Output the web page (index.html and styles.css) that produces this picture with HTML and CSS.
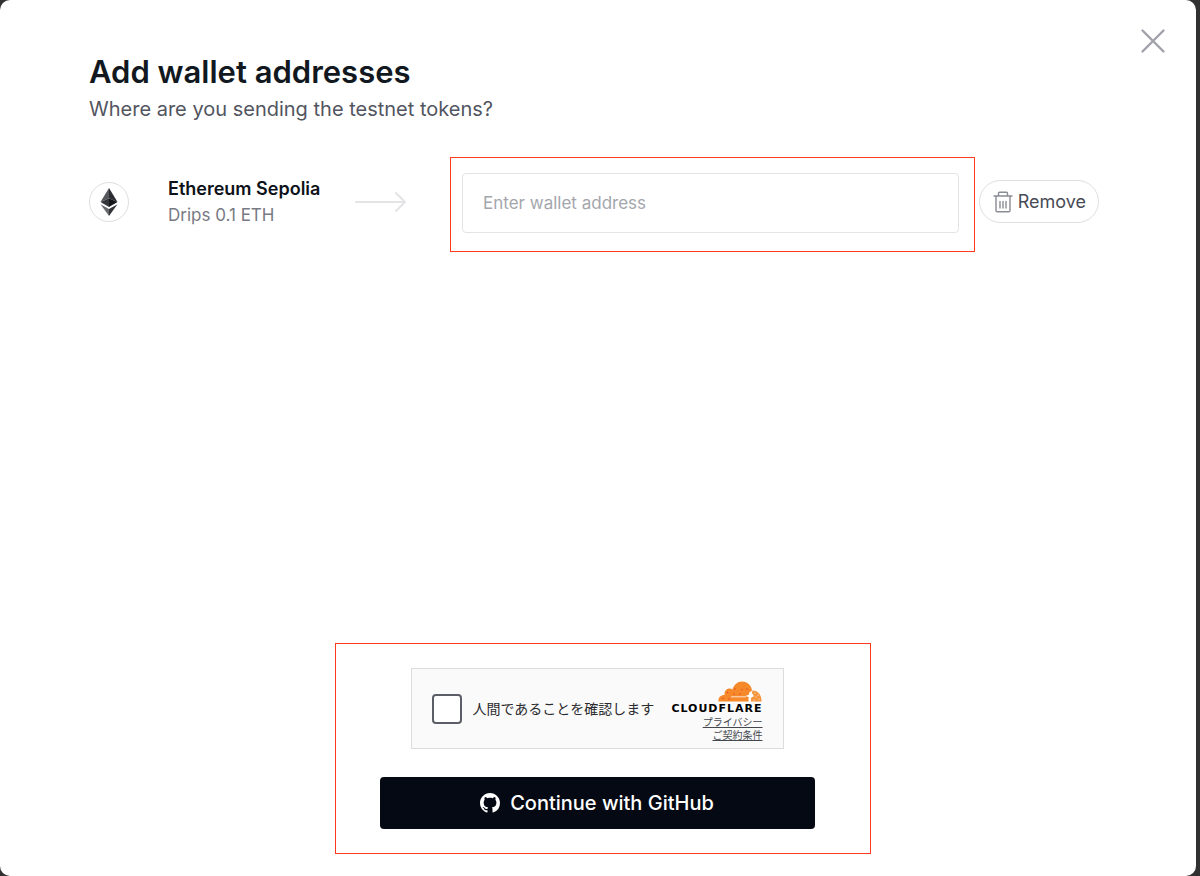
FILE: index.html
```html
<!DOCTYPE html>
<html lang="en">
<head>
    <meta charset="UTF-8">
    <meta name="viewport" content="width=device-width, initial-scale=1.0">
    <title>Add wallet addresses</title>
    <link rel="stylesheet" href="styles.css">
</head>
<body>
    <main class="modal">
        <button class="close" type="button" aria-label="Close">
            <svg width="26" height="26" viewBox="0 0 26 26" fill="none" stroke="#a1a1aa" stroke-width="2.4" stroke-linecap="round">
                <path d="M2.5 2.5l21 21M23.5 2.5l-21 21"/>
            </svg>
        </button>

        <header class="heading">
            <h1>Add wallet addresses</h1>
            <p>Where are you sending the testnet tokens?</p>
        </header>

        <form class="form">
            <div class="wallet">
                <div class="coin">
                    <svg width="18" height="28" viewBox="0 0 18 28">
                        <path fill="#55565b" d="M9 0L0.5 14L9 10.2z"/>
                        <path fill="#2b2d33" d="M9 0L17.5 14L9 10.2z"/>
                        <path fill="#34363c" d="M0.5 14L9 10.2V19z"/>
                        <path fill="#14161b" d="M17.5 14L9 10.2V19z"/>
                        <path fill="#696a6f" d="M0.5 16.2L9 21V28z"/>
                        <path fill="#33353b" d="M17.5 16.2L9 21V28z"/>
                    </svg>
                </div>
                <div class="network">
                    <label for="address">Ethereum Sepolia</label>
                    <p>Drips 0.1 ETH</p>
                </div>
                <svg class="arrow" width="52" height="22" viewBox="0 0 52 22" fill="none" stroke="#e4e4e7" stroke-width="2" stroke-linecap="round" stroke-linejoin="round">
                    <path d="M1 11h49M41 2l9 9l-9 9"/>
                </svg>
                <div class="frame address-frame">
                    <input class="address" id="address" type="text" placeholder="Enter wallet address">
                </div>
                <button class="remove" type="button">
                    <svg width="20" height="22" viewBox="0 0 20 22" fill="none" stroke="#898c94" stroke-width="1.4" stroke-linecap="round" stroke-linejoin="round">
                        <path d="M1 5h18M5.5 5V2.2Q5.5 1.2 6.5 1.2h7Q14.5 1.2 14.5 2.2V5M3 5v14.6Q3 20.8 4.2 20.8h11.6Q17 20.8 17 19.6V5M7 10.5v6.5M10 10.5v6.5M13 10.5v6.5"/>
                    </svg>
                    Remove
                </button>
            </div>

            <div class="frame submit-frame">
                <div class="captcha" lang="ja">
                    <label class="check">
                        <input type="checkbox">
                        人間であることを確認します
                    </label>
                    <div class="brand">
                        <svg width="46" height="21" viewBox="0 0 46 21">
                            <path fill="#f6892a" d="M1.5 20.5C1 16.5 3.5 14 7.5 14C7 9 11.5 6 15.5 8.5C17 3.5 20.5 0.5 25 0.5C30.5 0.5 34.5 4.5 35 9.5L32 12L35 15L31.5 17V20.5z"/>
                            <path fill="#f6943a" d="M35.5 9.5C41 9.5 44.8 14 44.5 20.5H34V17L36.5 14.5L35 12z"/>
                            <path fill="#fff" d="M33 10.5l1.2 3.3l3.3 1.2l-3.3 1.2l-1.2 3.3l-1.2-3.3l-3.3-1.2l3.3-1.2z"/>
                            <path stroke="#fde3cc" stroke-width="1" d="M14 15.8h15"/>
                            <g fill="#ee3b2b">
                                <circle cx="10.5" cy="11.5" r=".7"/><circle cx="17" cy="13" r=".7"/>
                                <circle cx="18" cy="8" r=".7"/><circle cx="25" cy="8.5" r=".7"/>
                                <circle cx="30" cy="8" r=".7"/><circle cx="23" cy="13" r=".7"/>
                                <circle cx="6" cy="17.5" r=".7"/><circle cx="12" cy="18" r=".7"/>
                            </g>
                            <g fill="#fff">
                                <circle cx="38" cy="12" r=".6"/><circle cx="41" cy="14" r=".6"/>
                                <circle cx="39" cy="16" r=".6"/><circle cx="42" cy="18" r=".6"/>
                                <circle cx="37" cy="19" r=".6"/>
                            </g>
                        </svg>
                        <strong>CLOUDFLARE</strong>
                        <a href="#">プライバシー</a>
                        <a href="#">ご契約条件</a>
                    </div>
                </div>
                <button class="github" type="submit">
                    <svg width="20" height="20" viewBox="0 0 16 16" fill="#fff">
                        <path d="M8 0C3.58 0 0 3.58 0 8c0 3.54 2.29 6.53 5.47 7.59.4.07.55-.17.55-.38 0-.19-.01-.82-.01-1.49-2.01.37-2.53-.49-2.69-.94-.09-.23-.48-.94-.82-1.13-.28-.15-.68-.52-.01-.53.63-.01 1.08.58 1.23.82.72 1.21 1.87.87 2.33.66.07-.52.28-.87.51-1.07-1.78-.2-3.64-.89-3.64-3.95 0-.87.31-1.59.82-2.15-.08-.2-.36-1.02.08-2.12 0 0 .67-.21 2.2.82.64-.18 1.32-.27 2-.27s1.36.09 2 .27c1.53-1.04 2.2-.82 2.2-.82.44 1.1.16 1.92.08 2.12.51.56.82 1.27.82 2.15 0 3.07-1.87 3.75-3.65 3.95.29.25.54.73.54 1.48 0 1.07-.01 1.93-.01 2.2 0 .21.15.46.55.38A8.01 8.01 0 0 0 16 8c0-4.42-3.58-8-8-8z"/>
                    </svg>
                    Continue with GitHub
                </button>
            </div>
        </form>
    </main>
</body>
</html>
```
FILE: styles.css
```css
* {
    box-sizing: border-box;
}
body {
    margin: 0;
    font-family: Inter, "Noto Sans CJK JP", sans-serif;
    background: #313131;
}
h1, p {
    margin: 0;
}
button {
    font-family: inherit;
    cursor: pointer;
}
.modal {
    position: relative;
    display: flex;
    flex-direction: column;
    min-height: 100vh;
    margin-right: 4px;
    padding: 51px 97px 22px 89px;
    background: #fff;
    border-radius: 10px;
}
.close {
    position: absolute;
    top: 28px;
    right: 30px;
    display: flex;
    padding: 0;
    border: none;
    background: none;
}
.heading h1 {
    font-size: 31px;
    line-height: 42px;
    font-weight: 600;
    color: #111820;
}
.heading p {
    font-size: 20px;
    line-height: 32px;
    color: #52555f;
}
.form {
    flex: 1;
    display: flex;
    flex-direction: column;
    justify-content: space-between;
    margin-top: 32px;
}
.frame {
    border: 1px solid #ff3b1f;
}

/* Wallet row */
.wallet {
    display: flex;
    align-items: center;
}
.coin {
    display: flex;
    align-items: center;
    justify-content: center;
    width: 40px;
    height: 40px;
    margin-right: 39px;
    border: 1px solid #dedfe2;
    border-radius: 50%;
}
.network {
    width: 187px;
}
.network label {
    font-size: 18px;
    line-height: 26px;
    font-weight: 600;
    color: #0d1119;
}
.network p {
    font-size: 17px;
    line-height: 26px;
    color: #777a83;
}
.arrow {
    margin-right: 43px;
}
.address-frame {
    flex: 1;
    margin-right: 4px;
    margin-bottom: -6px;
    padding: 15px 15px 18px 11px;
}
.address {
    display: block;
    width: 100%;
    height: 60px;
    padding: 0 20px;
    border: 1px solid #e4e4e7;
    border-radius: 4px;
    font-family: inherit;
    font-size: 17px;
    color: #111820;
}
.address::placeholder {
    color: #a4a6ad;
}
.remove {
    display: flex;
    align-items: center;
    gap: 5px;
    height: 43px;
    padding: 0 12px 0 13px;
    border: 1px solid #dedfe2;
    border-radius: 22px;
    background: #fff;
    font-size: 18px;
    color: #484b55;
}

/* Captcha and sign in */
.submit-frame {
    display: flex;
    flex-direction: column;
    align-items: center;
    align-self: center;
    gap: 28px;
    width: 100%;
    max-width: 536px;
    margin-left: 17px;
    padding: 24px 55px 24px 44px;
}
.captcha {
    display: flex;
    align-items: center;
    justify-content: space-between;
    width: 373px;
    max-width: 100%;
    height: 81px;
    padding: 0 20px;
    border: 1px solid #dddddd;
    background: #fafafa;
}
.check {
    display: flex;
    align-items: center;
    gap: 11px;
    font-size: 14px;
    line-height: 20px;
    color: #2b2b2f;
}
.check input {
    appearance: none;
    width: 30px;
    height: 30px;
    margin: 0;
    border: 2px solid #5b5e66;
    border-radius: 4px;
    background: #fff;
}
.brand {
    display: flex;
    flex-direction: column;
    align-items: flex-end;
    padding-top: 5px;
}
.brand strong {
    font-family: "DejaVu Sans", sans-serif;
    font-size: 11px;
    line-height: 14px;
    letter-spacing: 1px;
    color: #000;
}
.brand a {
    font-size: 10px;
    line-height: 13px;
    color: #45484f;
}
.github {
    display: flex;
    align-items: center;
    justify-content: center;
    gap: 10px;
    width: 100%;
    height: 52px;
    border: none;
    border-radius: 4px;
    background: #050914;
    font-size: 20px;
    font-weight: 500;
    color: #fff;
}
```
